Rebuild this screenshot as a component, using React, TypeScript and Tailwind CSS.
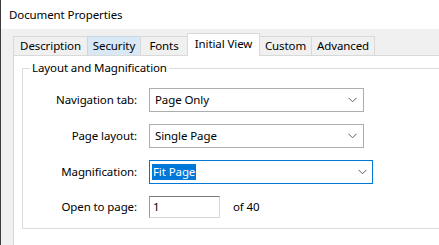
import React from "react";

const tabs = [
  { label: "Description", w: "w-[75px]" },
  { label: "Security", w: "w-[54px]", hover: true },
  { label: "Fonts", w: "w-[48px]" },
  { label: "Initial View", w: "w-[73px]", active: true },
  { label: "Custom", w: "w-[53px]" },
  { label: "Advanced", w: "w-[64px]" },
];

function Chevron() {
  return (
    <svg width="9" height="6" viewBox="0 0 9 6" className="shrink-0">
      <polyline points="0.5,0.8 4.5,4.8 8.5,0.8" fill="none" stroke="#5f5f5f" strokeWidth="1" />
    </svg>
  );
}

function Select({ value }: { value: string }) {
  return (
    <div className="flex h-[24px] w-[215px] items-center justify-between border border-[#adadad] bg-white pl-[5px] pr-[6px]">
      <span>{value}</span>
      <Chevron />
    </div>
  );
}

export default function App() {
  return (
    <div className="h-[245px] w-[439px] overflow-hidden border-l border-[#3c3c3c] bg-[#f0f0f0] font-['Segoe_UI','Noto_Sans',sans-serif] text-[11.5px] leading-[16px] tracking-[-0.1px] text-black">
      <div className="flex h-[29px] items-center bg-white pl-[8px]">Document Properties</div>

      <div className="pl-[12px] pt-[4px]">
        <div className="flex h-[22px] items-end">
          {tabs.map((t, i) => (
            <div
              key={t.label}
              className={
                (i > 0 ? "-ml-px " : "") +
                t.w +
                " flex items-center justify-center border-x border-t " +
                (t.active
                  ? "relative z-10 -mb-px h-[23px] border-[#d9d9d9] bg-white pb-[3px]"
                  : t.hover
                  ? "h-[19px] border-[#c9d7e5] bg-[#d9e8f5]"
                  : "h-[19px] border-[#d9d9d9] bg-[#f0f0f0]")
              }
            >
              {t.label}
            </div>
          ))}
        </div>

        <div className="h-[200px] w-[460px] border border-[#d9d9d9] bg-white pl-[8px] pt-[4px]">
          <fieldset className="w-[440px] border border-[#dcdcdc] pb-[10px]">
            <legend className="ml-[7px] px-[2px]">Layout and Magnification</legend>
            <div className="grid grid-cols-[114px_auto] items-center gap-x-[12px] gap-y-[12px] pt-[12px]">
              <span className="text-right">Navigation tab:</span>
              <Select value="Page Only" />

              <span className="text-right">Page layout:</span>
              <Select value="Single Page" />

              <span className="text-right">Magnification:</span>
              <div className="flex h-[24px] w-[224px] items-center justify-between border border-[#0078d7] bg-white pl-[2px] pr-[5px]">
                <span className="bg-[#0078d7] px-[1px] text-white">Fit Page</span>
                <Chevron />
              </div>

              <span className="text-right">Open to page:</span>
              <div className="flex items-center">
                <div className="flex h-[22px] w-[71px] items-center border border-t-[#7a7a7a] border-l-[#9a9a9a] border-r-[#d6d6d6] border-b-[#d6d6d6] bg-white pl-[3px]">
                  1
                </div>
                <span className="ml-[13px]">of 40</span>
              </div>
            </div>
          </fieldset>
        </div>
      </div>
    </div>
  );
}
